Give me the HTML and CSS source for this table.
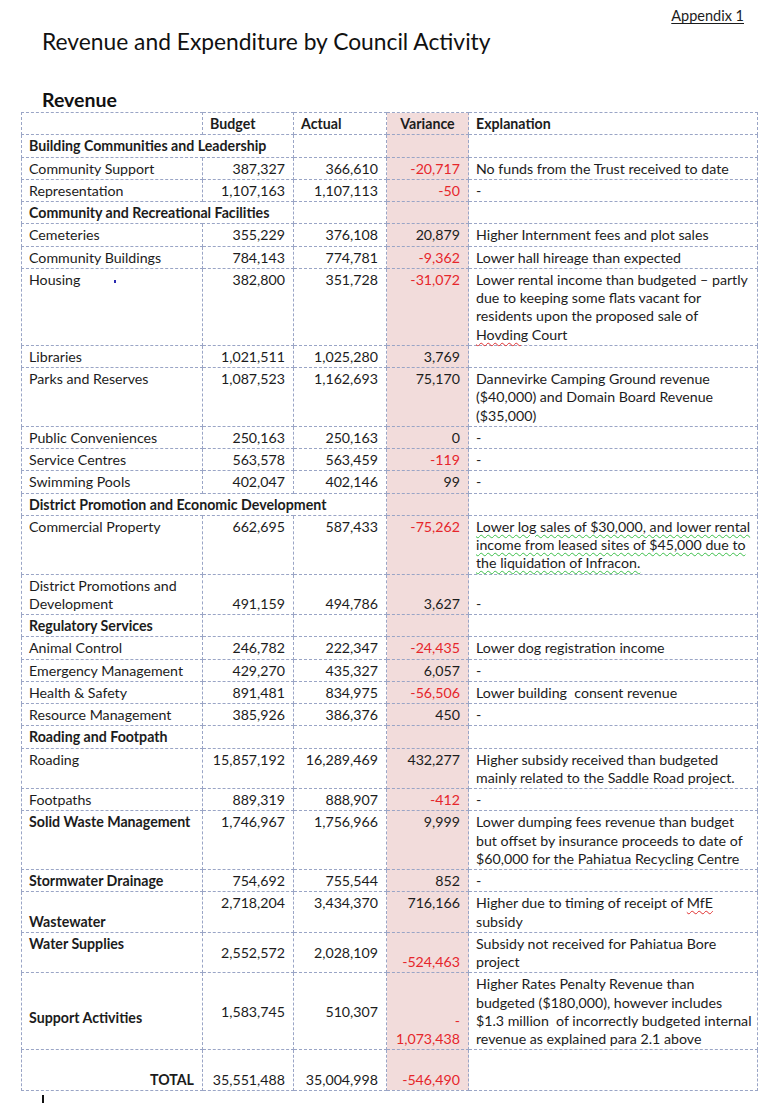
FILE: index.html
```html
<!DOCTYPE html>
<html>
<head>
<meta charset="utf-8">
<link rel="stylesheet" href="styles.css">
</head>
<body>
<div class="page">
  <div class="appendix"><span>Appendix 1</span></div>
  <h1 class="title">Revenue and Expenditure by Council Activity</h1>
  <h2 class="subtitle">Revenue</h2>
  <table class="report">
    <colgroup>
      <col class="c-name"><col class="c-num"><col class="c-num2"><col class="c-var"><col class="c-exp">
    </colgroup>
    <tr class="head">
      <td></td><td>Budget</td><td>Actual</td><td class="var center">Variance</td><td>Explanation</td>
    </tr>
    <tr><td class="b" colspan="2">Building Communities and Leadership</td><td></td><td class="var"></td><td></td></tr>
    <tr><td>Community Support</td><td class="n">387,327</td><td class="n">366,610</td><td class="var n neg">-20,717</td><td>No funds from the Trust received to date</td></tr>
    <tr><td>Representation</td><td class="n">1,107,163</td><td class="n">1,107,113</td><td class="var n neg">-50</td><td>-</td></tr>
    <tr><td class="b" colspan="2">Community and Recreational Facilities</td><td></td><td class="var"></td><td></td></tr>
    <tr><td>Cemeteries</td><td class="n">355,229</td><td class="n">376,108</td><td class="var n">20,879</td><td>Higher Internment fees and plot sales</td></tr>
    <tr><td>Community Buildings</td><td class="n">784,143</td><td class="n">774,781</td><td class="var n neg">-9,362</td><td>Lower hall hireage than expected</td></tr>
    <tr><td>Housing<span class="dot"></span></td><td class="n">382,800</td><td class="n">351,728</td><td class="var n neg">-31,072</td><td>Lower rental income than budgeted – partly<br>due to keeping some flats vacant for<br>residents upon the proposed sale of<br><span class="spell">Hovding</span> Court</td></tr>
    <tr><td>Libraries</td><td class="n">1,021,511</td><td class="n">1,025,280</td><td class="var n">3,769</td><td></td></tr>
    <tr><td>Parks and Reserves</td><td class="n">1,087,523</td><td class="n">1,162,693</td><td class="var n">75,170</td><td>Dannevirke Camping Ground revenue<br>($40,000) and Domain Board Revenue<br>($35,000)</td></tr>
    <tr><td>Public Conveniences</td><td class="n">250,163</td><td class="n">250,163</td><td class="var n">0</td><td>-</td></tr>
    <tr><td>Service Centres</td><td class="n">563,578</td><td class="n">563,459</td><td class="var n neg">-119</td><td>-</td></tr>
    <tr><td>Swimming Pools</td><td class="n">402,047</td><td class="n">402,146</td><td class="var n">99</td><td>-</td></tr>
    <tr><td class="b" colspan="3">District Promotion and Economic Development</td><td class="var"></td><td></td></tr>
    <tr><td>Commercial Property</td><td class="n">662,695</td><td class="n">587,433</td><td class="var n neg">-75,262</td><td><span class="grammar">Lower log sales of $30,000, and lower rental</span><br><span class="grammar">income from leased sites of $45,000 due to</span><br><span class="grammar">the liquidation of Infracon.</span></td></tr>
    <tr class="bottom"><td>District Promotions and<br>Development</td><td class="n">491,159</td><td class="n">494,786</td><td class="var n">3,627</td><td>-</td></tr>
    <tr><td class="b">Regulatory Services</td><td></td><td></td><td class="var"></td><td></td></tr>
    <tr><td>Animal Control</td><td class="n">246,782</td><td class="n">222,347</td><td class="var n neg">-24,435</td><td>Lower dog registration income</td></tr>
    <tr><td>Emergency Management</td><td class="n">429,270</td><td class="n">435,327</td><td class="var n">6,057</td><td>-</td></tr>
    <tr><td>Health &amp; Safety</td><td class="n">891,481</td><td class="n">834,975</td><td class="var n neg">-56,506</td><td>Lower building&nbsp; consent revenue</td></tr>
    <tr><td>Resource Management</td><td class="n">385,926</td><td class="n">386,376</td><td class="var n">450</td><td>-</td></tr>
    <tr><td class="b">Roading and Footpath</td><td></td><td></td><td class="var"></td><td></td></tr>
    <tr><td>Roading</td><td class="n">15,857,192</td><td class="n">16,289,469</td><td class="var n">432,277</td><td>Higher subsidy received than budgeted<br>mainly related to the Saddle Road project.</td></tr>
    <tr><td>Footpaths</td><td class="n">889,319</td><td class="n">888,907</td><td class="var n neg">-412</td><td>-</td></tr>
    <tr><td class="b">Solid Waste Management</td><td class="n">1,746,967</td><td class="n">1,756,966</td><td class="var n">9,999</td><td>Lower dumping fees revenue than budget<br>but offset by insurance proceeds to date of<br>$60,000 for the Pahiatua Recycling Centre</td></tr>
    <tr><td class="b">Stormwater Drainage</td><td class="n">754,692</td><td class="n">755,544</td><td class="var n">852</td><td>-</td></tr>
    <tr><td class="b vb">Wastewater</td><td class="n">2,718,204</td><td class="n">3,434,370</td><td class="var n">716,166</td><td>Higher due to timing of receipt of <span class="spell">MfE</span><br>subsidy</td></tr>
    <tr><td class="b">Water Supplies</td><td class="n vm">2,552,572</td><td class="n vm">2,028,109</td><td class="var n neg vb">-524,463</td><td>Subsidy not received for Pahiatua Bore<br>project</td></tr>
    <tr><td class="b vm lower">Support Activities</td><td class="n vm">1,583,745</td><td class="n vm">510,307</td><td class="var n neg vb">-<br>1,073,438</td><td>Higher Rates Penalty Revenue than<br>budgeted ($180,000), however includes<br>$1.3 million&nbsp; of incorrectly budgeted internal<br>revenue as explained para 2.1 above</td></tr>
    <tr class="bottom total"><td class="b n">TOTAL</td><td class="n">35,551,488</td><td class="n">35,004,998</td><td class="var n neg">-546,490</td><td><br>&nbsp;</td></tr>
  </table>
  <div class="cursor"></div>
</div>
</body>
</html>
```

FILE: styles.css
```css
html, body {
  margin: 0;
  padding: 0;
  background: #ffffff;
}

.page {
  width: 736px;
  padding: 7px 0 0 21px;
  font-family: Lato, "Open Sans", "Liberation Sans", sans-serif;
  color: #1c1c1c;
}

.appendix {
  text-align: right;
  padding-right: 13px;
  font-size: 14.5px;
  line-height: 18px;
}

.appendix span {
  text-decoration: underline;
  text-underline-offset: 2px;
}

.title {
  margin: 2px 0 0 21px;
  font-size: 22.8px;
  line-height: 28px;
  font-weight: normal;
  color: #111;
}

.subtitle {
  margin: 34px 0 1px 21px;
  font-size: 19.5px;
  line-height: 22px;
  font-weight: bold;
  color: #111;
}

.report {
  border-collapse: collapse;
  table-layout: fixed;
  width: 736px;
  font-size: 14.2px;
  line-height: 18.25px;
}

.c-name { width: 181px; }
.c-num { width: 91px; }
.c-num2 { width: 93px; }
.c-var { width: 82px; }
.c-exp { width: 289px; }

.report td {
  border: 1px dashed #9aa5c6;
  padding: 2px 7px 1px 7px;
  vertical-align: top;
  white-space: nowrap;
}

.report .head td {
  font-weight: bold;
}

.report td.var {
  background: #f2dcdb;
}

.report td.center {
  text-align: center;
}

.report td.n {
  text-align: right;
  padding-right: 8px;
}

.report td.neg {
  color: #e6262b;
}

.report td.b {
  font-weight: bold;
}

.report td.vb,
.report tr.bottom td {
  vertical-align: bottom;
}

.report td.vm {
  vertical-align: middle;
}

.report td.lower {
  padding-top: 14px;
}

.dot {
  display: inline-block;
  width: 2px;
  height: 3px;
  margin-left: 34px;
  background: #2a2ab0;
  vertical-align: middle;
}

.spell {
  text-decoration: underline wavy #e03030;
  text-decoration-thickness: 1px;
  text-underline-offset: 2px;
}

.grammar {
  text-decoration: underline wavy #3cbf4a;
  text-decoration-thickness: 1px;
  text-underline-offset: 2px;
}

.cursor {
  width: 2px;
  height: 12px;
  margin: 4px 0 0 21px;
  background: #111;
}
```
